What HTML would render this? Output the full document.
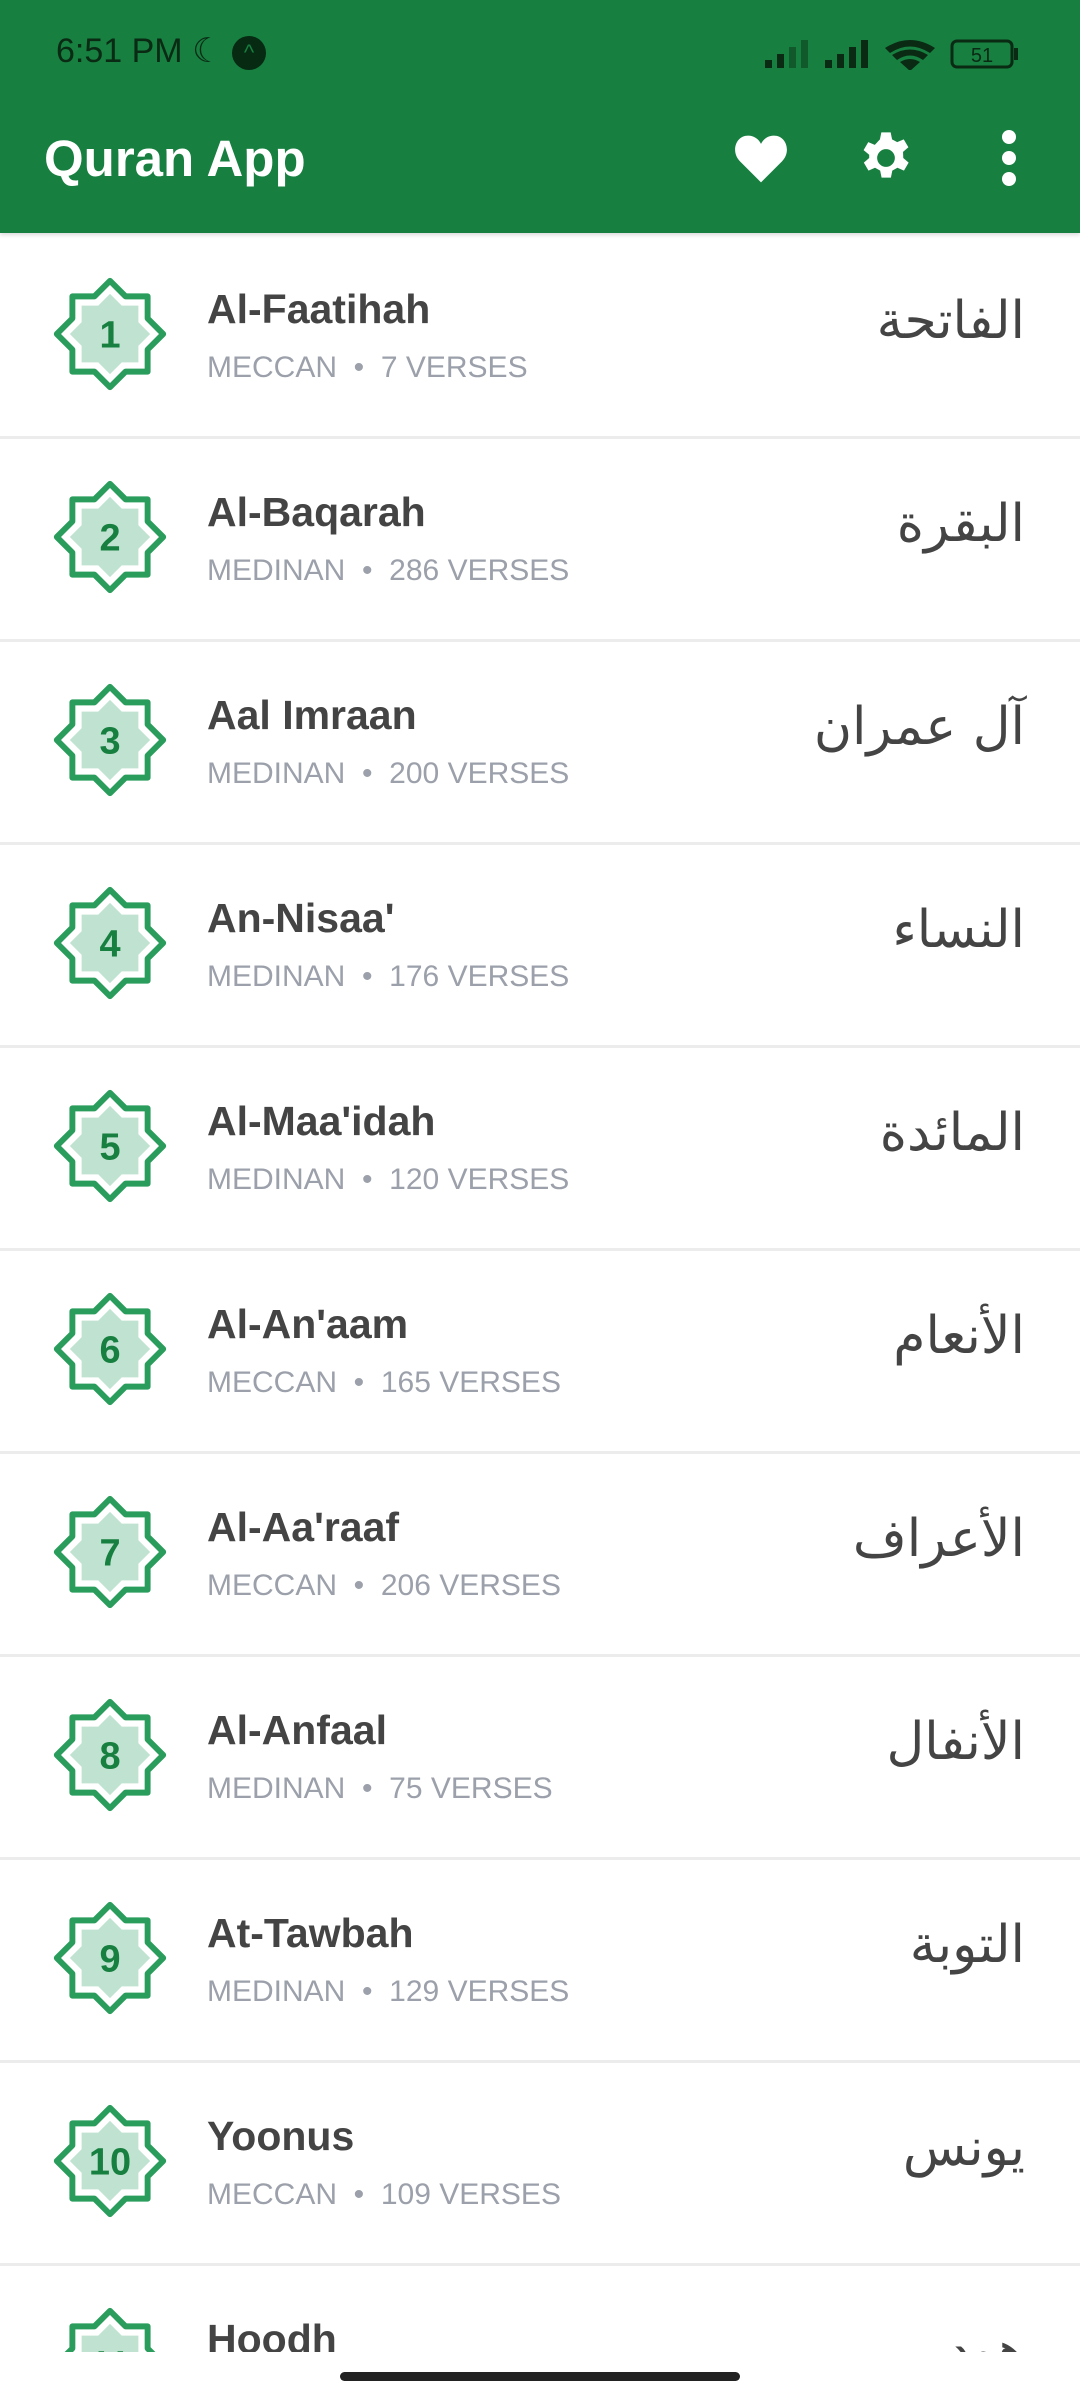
<!DOCTYPE html>
<html style="width:1080px;height:2400px;overflow:hidden"><head><meta charset="utf-8"><style>
*{margin:0;padding:0;box-sizing:border-box}
body{width:1080px;height:2400px;overflow:hidden;background:#fff;font-family:"Liberation Sans",sans-serif;position:relative}
.hdr{position:absolute;left:0;top:0;width:1080px;height:233px;background:#177f3f;box-shadow:0 2px 4px rgba(0,0,0,.15);z-index:2}
.time{position:absolute;left:56px;top:31px;font-size:34px;color:#0a2a14}
.title{position:absolute;left:44px;top:129px;font-size:51px;font-weight:bold;color:#fff}
#list{position:absolute;left:0;top:0;width:1080px;height:2352px;overflow:hidden}
.row{position:absolute;left:0;width:1080px;height:203px;border-bottom:3px solid #ececec}
.star{position:absolute;left:52px;top:40px}
.name{position:absolute;left:207px;top:50px;font-size:41px;font-weight:bold;color:#444}
.sub{position:absolute;left:207px;top:115px;font-size:30px;color:#9ba0aa}
.ar{position:absolute;right:55px;top:55px;font-size:52px;color:#444;font-family:"DejaVu Sans",sans-serif;direction:rtl}
.handle{position:absolute;left:340px;top:2372px;width:400px;height:9px;border-radius:5px;background:#222}
</style></head><body>
<div class="hdr">
<div class="time">6:51 PM ☾ <span style="display:inline-block;width:34px;height:34px;border-radius:50%;background:#062a12;color:#177f3f;font-size:22px;text-align:center;line-height:34px;vertical-align:2px">^</span></div>
<svg style="position:absolute;left:765px;top:38px" width="260" height="32" viewBox="0 0 260 32">
<g fill="#0a2a14"><rect x="0" y="22" width="7" height="8"/><rect x="12" y="16" width="7" height="14"/><rect x="24" y="9" width="7" height="21" opacity=".45"/><rect x="36" y="2" width="7" height="28" opacity=".45"/>
<rect x="60" y="22" width="7" height="8"/><rect x="72" y="16" width="7" height="14"/><rect x="84" y="9" width="7" height="21"/><rect x="96" y="2" width="7" height="28"/></g>
<path d="M120 10 Q145 -6 170 10 L165 15 Q145 2 125 15Z M127 17 Q145 6 163 17 L158 22 Q145 13 132 22Z M135 24 Q145 18 155 24 L145 33Z" fill="#0a2a14"/>
<rect x="187" y="3" width="60" height="26" rx="5" fill="none" stroke="#0a2a14" stroke-width="3"/><rect x="249" y="10" width="4" height="12" fill="#0a2a14"/>
<text x="217" y="24" font-size="20" text-anchor="middle" fill="#0a2a14" font-family="Liberation Sans">51</text></svg>
<div class="title">Quran App</div>
<svg style="position:absolute;left:733px;top:133px" width="56" height="52" viewBox="0 0 24 22"><path d="M12 21 L3 12 C-1 8 1 1 6.5 1 C9 1 11 2.5 12 4.5 C13 2.5 15 1 17.5 1 C23 1 25 8 21 12Z" fill="#fff"/></svg>
<svg style="position:absolute;left:858px;top:130px" width="56" height="56" viewBox="0 0 24 24"><path fill="#fff" fill-rule="evenodd" d="M10 1h4l.6 3 2.2 1.2 2.8-1.2 2 3.4-2.3 2 .1 2.6 2.3 2-2 3.4-2.8-1.2-2.2 1.2-.6 3h-4l-.6-3-2.2-1.2-2.8 1.2-2-3.4 2.3-2V10.6L2.4 8.6l2-3.4 2.8 1.2L9.4 4zM12 8.2a3.8 3.8 0 1 0 0 7.6 3.8 3.8 0 1 0 0-7.6z"/></svg>
<svg style="position:absolute;left:998px;top:128px" width="22" height="60"><circle cx="11" cy="9" r="7" fill="#fff"/><circle cx="11" cy="30" r="7" fill="#fff"/><circle cx="11" cy="51" r="7" fill="#fff"/></svg>
</div>
<div id="list"></div>
<div class="handle"></div>
<script>
var d=[["Al-Faatihah","MECCAN","7","الفاتحة"],["Al-Baqarah","MEDINAN","286","البقرة"],["Aal Imraan","MEDINAN","200","آل عمران"],["An-Nisaa'","MEDINAN","176","النساء"],["Al-Maa'idah","MEDINAN","120","المائدة"],["Al-An'aam","MECCAN","165","الأنعام"],["Al-Aa'raaf","MECCAN","206","الأعراف"],["Al-Anfaal","MEDINAN","75","الأنفال"],["At-Tawbah","MEDINAN","129","التوبة"],["Yoonus","MECCAN","109","يونس"],["Hoodh","MECCAN","123","هود"]];
var P="M45,0 L31.82,13.18 31.82,31.82 13.18,31.82 0,45 -13.18,31.82 -31.82,31.82 -31.82,13.18 -45,0 -31.82,-13.18 -31.82,-31.82 -13.18,-31.82 0,-45 13.18,-31.82 31.82,-31.82 31.82,-13.18Z";
var h="";
d.forEach(function(r,i){
h+='<div class="row" style="top:'+(236+203*i)+'px"><svg class="star" width="116" height="116" viewBox="-52 -52 104 104"><path d="'+P+'" transform="scale(1.06)" fill="none" stroke="#2a9d5c" stroke-width="5" stroke-linejoin="round"/><path d="'+P+'" transform="scale(.8)" fill="#bfe3d0"/><text x="0" y="12" font-size="34" font-weight="bold" fill="#177f3f" text-anchor="middle" font-family="Liberation Sans">'+(i+1)+'</text></svg><div class="name">'+r[0]+'</div><div class="sub">'+r[1]+' &nbsp;•&nbsp; '+r[2]+' VERSES</div><div class="ar">'+r[3]+'</div></div>';
});
document.getElementById("list").innerHTML=h;
</script>
</body></html>
